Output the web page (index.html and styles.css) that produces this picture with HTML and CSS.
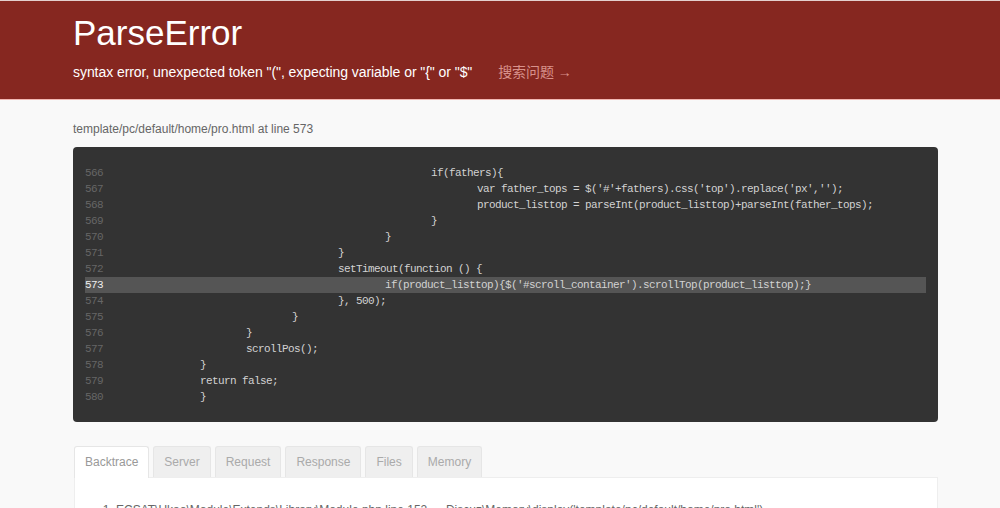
FILE: index.html
```html
<!DOCTYPE html>
<html lang="zh-CN">
<head>
  <meta charset="UTF-8">
  <meta name="viewport" content="width=device-width, initial-scale=1.0">
  <link rel="stylesheet" href="styles.css">
</head>
<body>
  <div class="header">
    <div class="wrap">
      <h1>ParseError</h1>
      <p class="message">syntax error, unexpected token "(", expecting variable or "{" or "$" <a href="#" class="search">搜索问题 &rarr;</a></p>
    </div>
  </div>

  <div class="wrap">
    <p class="file">template/pc/default/home/pro.html at line 573</p>

    <div class="source">
      <div class="line"><span class="num">566</span><span class="code l5">if(fathers){</span></div>
      <div class="line"><span class="num">567</span><span class="code l6">var father_tops = $('#'+fathers).css('top').replace('px','');</span></div>
      <div class="line"><span class="num">568</span><span class="code l6">product_listtop = parseInt(product_listtop)+parseInt(father_tops);</span></div>
      <div class="line"><span class="num">569</span><span class="code l5">}</span></div>
      <div class="line"><span class="num">570</span><span class="code l4">}</span></div>
      <div class="line"><span class="num">571</span><span class="code l3">}</span></div>
      <div class="line"><span class="num">572</span><span class="code l3">setTimeout(function () {</span></div>
      <div class="line current"><span class="num">573</span><span class="code l4">if(product_listtop){$('#scroll_container').scrollTop(product_listtop);}</span></div>
      <div class="line"><span class="num">574</span><span class="code l3">}, 500);</span></div>
      <div class="line"><span class="num">575</span><span class="code l2">}</span></div>
      <div class="line"><span class="num">576</span><span class="code l1">}</span></div>
      <div class="line"><span class="num">577</span><span class="code l1">scrollPos();</span></div>
      <div class="line"><span class="num">578</span><span class="code">}</span></div>
      <div class="line"><span class="num">579</span><span class="code">return false;</span></div>
      <div class="line"><span class="num">580</span><span class="code">}</span></div>
    </div>

    <ul class="tabs">
      <li class="active">Backtrace</li>
      <li>Server</li>
      <li>Request</li>
      <li>Response</li>
      <li>Files</li>
      <li>Memory</li>
    </ul>
    <div class="panel">
      <ol class="trace">
        <li>ECSAT\Ukao\Module\Extends\Library\Module.php line 152 &rarr; Discuz\Memory\display('template/pc/default/home/pro.html')</li>
      </ol>
    </div>
  </div>
</body>
</html>
```

FILE: styles.css
```css
body {
  font-family: 'Liberation Sans', Arial, 'Noto Sans CJK SC', sans-serif;
  background-color: #f9f9f9;
  color: #555;
  margin: 0;
  padding: 0;
}
.wrap {
  width: 865px;
  margin-left: 73px;
}
.header {
  background-color: #862720;
  border-top: 1px solid #e4cfcd;
  border-bottom: 1px solid #f2b8b3;
  padding: 12px 0 17px;
  color: #fff;
}
.header h1 {
  margin: 0;
  font-size: 35px;
  line-height: 40px;
  font-weight: normal;
}
.message {
  margin: 9px 0 0;
  font-size: 14px;
  line-height: 20px;
  letter-spacing: -0.06px;
}
.search {
  margin-left: 22px;
  color: #d8918b;
  text-decoration: none;
}
.file {
  margin: 21px 0 10px;
  font-size: 12px;
  line-height: 16px;
  color: #666;
}
.source {
  background-color: #333;
  border-radius: 4px;
  padding: 18px 12px 17px;
  font-family: 'Liberation Mono', 'DejaVu Sans Mono', monospace;
  font-size: 11px;
  letter-spacing: -0.6px;
  color: #d2d2d2;
}
.line {
  display: flex;
  height: 16px;
  line-height: 16px;
  white-space: pre;
}
.line .num {
  width: 115px;
  flex-shrink: 0;
  color: #666;
}
.line.current {
  background-color: #555;
}
.line.current .num {
  color: #eee;
}
.l1 { padding-left: 46px; }
.l2 { padding-left: 92px; }
.l3 { padding-left: 138px; }
.l4 { padding-left: 185px; }
.l5 { padding-left: 231px; }
.l6 { padding-left: 277px; }
.tabs {
  list-style: none;
  margin: 24px 0 0 1px;
  padding: 0;
  display: flex;
  gap: 4px;
}
.tabs li {
  height: 30px;
  line-height: 30px;
  padding: 0 10px;
  font-size: 12px;
  color: #aaa;
  background-color: #efefef;
  border: 1px solid #e6e6e6;
  border-bottom: none;
  border-radius: 3px 3px 0 0;
}
.tabs li.active {
  background-color: #fff;
  color: #999;
  height: 31px;
  margin-bottom: -1px;
}
.panel {
  background-color: #fff;
  border: 1px solid #eee;
  margin-left: 1px;
  width: 862px;
  padding: 23px 0 20px;
}
.trace {
  margin: 0;
  padding-left: 41px;
  font-size: 12px;
  line-height: 18px;
  color: #666;
}
```
